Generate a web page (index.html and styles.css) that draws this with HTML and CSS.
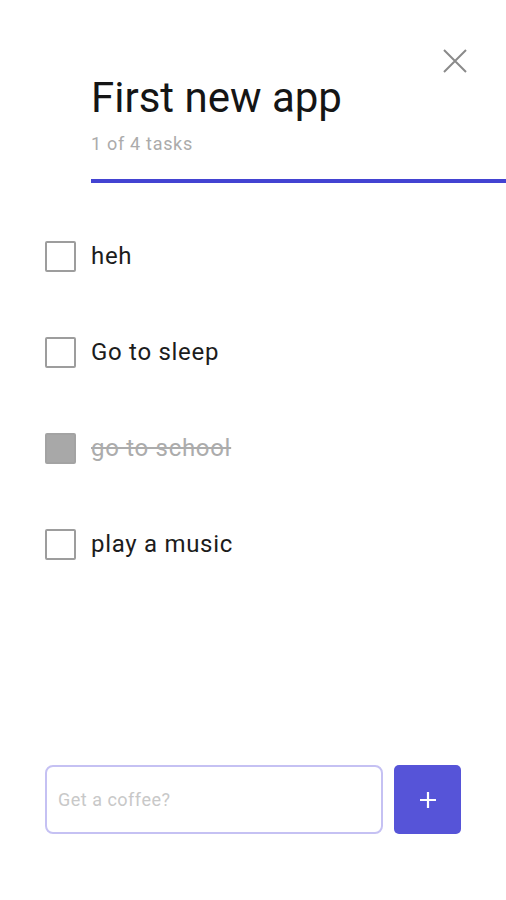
FILE: index.html
```html
<!DOCTYPE html>
<html lang="en">
<head>
    <meta charset="UTF-8">
    <meta name="viewport" content="width=device-width, initial-scale=1.0">
    <title>First new app</title>
    <link rel="stylesheet" href="styles.css">
</head>
<body>

    <div class="screen">
        <header class="list-header">
            <button class="close-btn" aria-label="Close">
                <svg width="24" height="24" viewBox="0 0 24 24">
                    <path d="M1 1 L23 23 M23 1 L1 23" stroke="#8a8a8a" stroke-width="2" fill="none"/>
                </svg>
            </button>
            <h1>First new app</h1>
            <p class="count">1 of 4 tasks</p>
            <div class="progress"></div>
        </header>

        <!-- Task list -->
        <ul class="task-list">
            <li class="task"><span class="box"></span><span class="label">heh</span></li>
            <li class="task"><span class="box"></span><span class="label">Go to sleep</span></li>
            <li class="task done"><span class="box"></span><span class="label">go to school</span></li>
            <li class="task"><span class="box"></span><span class="label">play a music</span></li>
        </ul>

        <!-- New task -->
        <div class="new-task">
            <input type="text" class="task-input" placeholder="Get a coffee?">
            <button class="add-btn" aria-label="Add">
                <svg width="20" height="20" viewBox="0 0 20 20">
                    <path d="M10 2 V18 M2 10 H18" stroke="#fff" stroke-width="2.2" fill="none"/>
                </svg>
            </button>
        </div>
    </div>

</body>
</html>
```

FILE: styles.css
```css
body {
    font-family: Roboto, 'Noto Sans', sans-serif;
    margin: 0;
    padding: 0;
    background-color: #fff;
    color: #1a1a1a;
}

.screen {
    display: flex;
    flex-direction: column;
    min-height: 900px;
    box-sizing: border-box;
    padding-bottom: 66px;
}

.list-header {
    position: relative;
    padding: 75px 0 0 91px;
}

.close-btn {
    position: absolute;
    top: 48px;
    right: 38px;
    width: 26px;
    height: 26px;
    padding: 1px;
    border: none;
    background: none;
}

.list-header h1 {
    margin: 0;
    font-size: 42px;
    font-weight: 400;
    line-height: 46px;
    color: #151515;
}

.count {
    margin: 12px 0 0;
    font-size: 18px;
    letter-spacing: 0.7px;
    line-height: 22px;
    color: #ababab;
}

.progress {
    margin-top: 24px;
    height: 4px;
    background-color: #4343d2;
}

.task-list {
    list-style: none;
    margin: 25px 0 0;
    padding: 0 0 0 45px;
}

.task {
    display: flex;
    align-items: center;
    height: 96px;
}

.box {
    width: 27px;
    height: 27px;
    border: 2px solid #9d9d9d;
    border-radius: 2px;
    margin-right: 15px;
}

.label {
    font-size: 24px;
    letter-spacing: 0.7px;
    color: #1c1c1c;
}

.done .box {
    background-color: #a8a8a8;
    border-color: #a3a3a3;
}

.done .label {
    color: #acacac;
    text-decoration: line-through;
}

.new-task {
    display: flex;
    margin-top: auto;
    padding-left: 45px;
    gap: 11px;
}

.task-input {
    width: 338px;
    height: 69px;
    box-sizing: border-box;
    border: 2px solid #c5c1f3;
    border-radius: 8px;
    padding: 0 11px;
    font-family: Roboto, sans-serif;
    font-size: 18px;
    letter-spacing: 0.5px;
    outline: none;
}

.task-input::placeholder {
    color: #c8c8c8;
}

.add-btn {
    width: 67px;
    height: 69px;
    border: none;
    border-radius: 5px;
    background-color: #5654d8;
    display: flex;
    align-items: center;
    justify-content: center;
    cursor: pointer;
}
```
